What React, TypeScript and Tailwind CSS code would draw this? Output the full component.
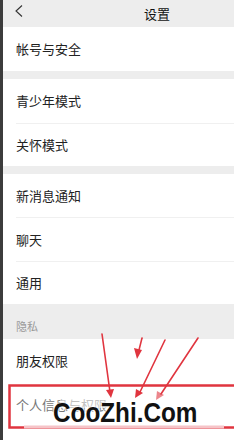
import React from 'react';

const FONT = { fontFamily: '"Noto Sans CJK SC", "Noto Sans", sans-serif' };

const Row = ({ label, h, divider }: { label: string; h: string; divider?: boolean }) => (
  <div className={`flex items-center bg-white pl-[13px] ${h}`}>
    <div className={`flex h-full flex-1 items-center ${divider ? 'border-t border-[#f0f0f0]' : ''}`}>
      <span className="text-[13px] text-[#222]">{label}</span>
    </div>
  </div>
);

const Gap = () => <div className="h-[8px] bg-[#ededed]" />;

export default function App() {
  return (
    <div
      className="relative h-[440px] w-[234px] overflow-hidden border-l-[3px] border-[#3c3c3c] bg-white"
      style={FONT}
    >
      {/* header */}
      <div className="flex h-[27px] items-center bg-[#ededed] pl-[12px]">
        <svg width="8" height="12" viewBox="0 0 8 12" className="mt-[-6px]">
          <polyline points="7,0.5 1,6 7,11.5" fill="none" stroke="#333" strokeWidth="1.1" />
        </svg>
        <span className="ml-[121px] text-[13px] text-[#111]">设置</span>
      </div>

      <Row label="帐号与安全" h="h-[44px]" />
      <Gap />
      <Row label="青少年模式" h="h-[44px]" />
      <Row label="关怀模式" h="h-[43px]" divider />
      <Gap />
      <Row label="新消息通知" h="h-[43px]" />
      <Row label="聊天" h="h-[44px]" divider />
      <Row label="通用" h="h-[43px]" divider />

      <div className="flex h-[35px] items-end bg-[#ededed] pb-[5px] pl-[13px]">
        <span className="text-[11px] text-[#999]">隐私</span>
      </div>
      <Row label="朋友权限" h="h-[44px]" />
      <div className="flex h-[44px] items-center bg-white pl-[13px]">
        <span className="text-[13px] text-[#777]">个人信息与权限</span>
      </div>

      {/* annotation overlay */}
      <svg className="absolute left-[-3px] top-0" width="234" height="440" viewBox="0 0 234 440">
        <rect x="9.5" y="385.5" width="240" height="42" fill="none" stroke="#e0353f" strokeWidth="2.5" />
        <line x1="24" y1="427" x2="224" y2="427" stroke="#f6c4c8" strokeWidth="3" />
        <rect x="60" y="388" width="110" height="20" fill="#fff" opacity="0.55" />
        <g stroke="#e0353f" strokeWidth="1.6" fill="#e0353f" strokeLinecap="round">
          <line x1="102" y1="334" x2="110" y2="392" />
          <polygon points="106,390 114,389 111,398" stroke="none" />
          <line x1="142" y1="338" x2="139" y2="350" />
          <polygon points="134,348 142,350 137,359" stroke="none" />
          <line x1="165" y1="340" x2="140" y2="392" />
          <polygon points="136,389 143,393 135,398" stroke="none" />
          <line x1="198" y1="338" x2="161" y2="394" />
          <polygon points="157,391 164,395 156,400" stroke="none" opacity="0.6" />
        </g>
      </svg>

      <div
        className="absolute left-[50px] top-[400px] origin-left scale-x-90 text-[27px] font-bold leading-none text-[#111]"
        style={{ fontFamily: '"Liberation Sans", Arial, sans-serif', textShadow: '0 0 3px #fff, 0 0 3px #fff' }}
      >
        CooZhi.Com
      </div>
    </div>
  );
}
